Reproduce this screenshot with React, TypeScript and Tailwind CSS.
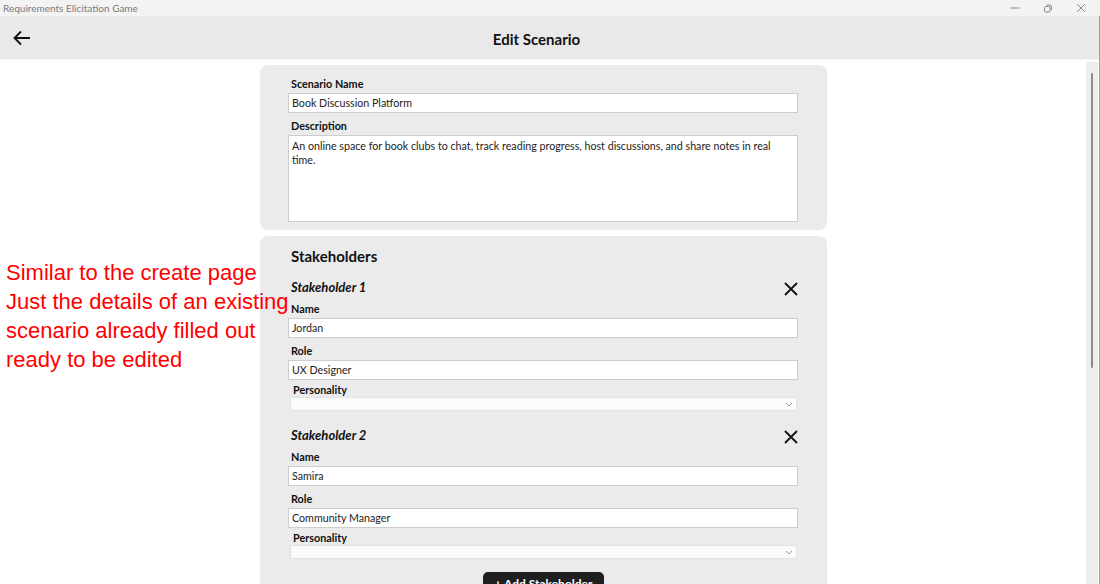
import React from "react";

const ui = { fontFamily: 'Lato, "Open Sans", sans-serif' };

function Label({ children, indent = false }: { children: React.ReactNode; indent?: boolean }) {
  return (
    <div className={`h-[14px] text-[10.8px] leading-[14px] font-bold text-[#111] ${indent ? "pl-[5px]" : "pl-[3px]"}`}>
      {children}
    </div>
  );
}

function TextInput({ value }: { value: string }) {
  return (
    <div className="mt-[2px] h-[20px] w-[510px] bg-white border border-[#cdcdcd] flex items-center pl-[3px] text-[10.7px] text-[#222]">
      {value}
    </div>
  );
}

function SelectBox() {
  return (
    <div className="ml-[2px] h-[14px] w-[507px] bg-[#fbfbfb] border border-[#e2e2e2] flex items-center justify-end pr-[3px]">
      <svg width="8" height="5" viewBox="0 0 8 5" fill="none">
        <path d="M1 1l3 3 3-3" stroke="#9a9a9a" strokeWidth="1" />
      </svg>
    </div>
  );
}

function Stakeholder({ n, name, role, first }: { n: number; name: string; role: string; first?: boolean }) {
  return (
    <div className={first ? "mt-[13px]" : "mt-[16px]"}>
      <div className="h-[18px] flex items-center justify-between pr-[28px]">
        <div className="pl-[3px] text-[13px] font-bold italic text-[#111]">Stakeholder {n}</div>
        <svg width="16" height="16" viewBox="0 0 16 16" fill="none" className="mt-[2px]">
          <path d="M2 2l12 12M14 2L2 14" stroke="#111" strokeWidth="1.8" />
        </svg>
      </div>
      <div className="mt-[5px]"><Label>Name</Label></div>
      <TextInput value={name} />
      <div className="mt-[6px]"><Label>Role</Label></div>
      <TextInput value={role} />
      <div className="mt-[3px]"><Label indent>Personality</Label></div>
      <SelectBox />
    </div>
  );
}

export default function App() {
  return (
    <div className="w-[1100px] h-[584px] overflow-hidden flex flex-col bg-white relative" style={ui}>
      {/* Title bar */}
      <div className="h-[16px] bg-[#f3f3f3] flex items-center justify-between shrink-0">
        <div className="pl-[3px] text-[10px] text-[#7a7a7a] leading-[16px]">Requirements Elicitation Game</div>
        <div className="flex items-center h-full">
          <div className="w-[33px] flex justify-center">
            <svg width="10" height="10" viewBox="0 0 10 10"><path d="M0.5 5h9" stroke="#8a8a8a" strokeWidth="1" /></svg>
          </div>
          <div className="w-[33px] flex justify-center">
            <svg width="10" height="10" viewBox="0 0 10 10" fill="none">
              <rect x="1.5" y="3.5" width="5.5" height="5.5" rx="1" stroke="#8a8a8a" />
              <path d="M3.5 2h3.5a1.5 1.5 0 0 1 1.5 1.5V7" stroke="#8a8a8a" />
            </svg>
          </div>
          <div className="w-[33px] flex justify-center mr-[3px]">
            <svg width="10" height="10" viewBox="0 0 10 10"><path d="M1 1l8 8M9 1L1 9" stroke="#8a8a8a" strokeWidth="1" /></svg>
          </div>
        </div>
      </div>

      {/* Header */}
      <div className="h-[44px] bg-[#e9e9e9] border-b border-[#f4f4f4] shrink-0 relative flex items-center justify-center">
        <div className="absolute left-[12px] top-[12px]">
          <svg width="20" height="20" viewBox="0 0 20 20" fill="none">
            <path d="M18 10H3M9 3.5L2.5 10 9 16.5" stroke="#111" strokeWidth="1.8" />
          </svg>
        </div>
        <div className="text-[15px] font-bold text-[#111] ml-[-27px] mt-[4px]">Edit Scenario</div>
      </div>

      {/* Main */}
      <div className="flex-1 flex min-h-0">
        <div className="w-[260px] shrink-0 pt-[198px] pl-[6px] relative z-10">
          <div className="text-[22px] leading-[29px] text-[#ff0000] whitespace-nowrap" style={{ fontFamily: '"Liberation Sans", Arial, sans-serif' }}>
            <div>Similar to the create page</div>
            <div>Just the details of an existing</div>
            <div>scenario already filled out</div>
            <div>ready to be edited</div>
          </div>
        </div>

        <div className="w-[567px] shrink-0 pt-[5px] flex flex-col gap-[6px]">
          {/* Card 1 */}
          <div className="bg-[#ebebeb] rounded-[8px] pt-[12px] pb-[8px] pl-[28px]">
            <Label>Scenario Name</Label>
            <TextInput value="Book Discussion Platform" />
            <div className="mt-[6px]"><Label>Description</Label></div>
            <div className="mt-[2px] h-[87px] w-[510px] bg-white border border-[#cdcdcd] px-[3px] pt-[3px] text-[10.7px] leading-[14px] text-[#222]">
              An online space for book clubs to chat, track reading progress, host discussions, and share notes in real time.
            </div>
          </div>

          {/* Card 2 */}
          <div className="bg-[#ebebeb] rounded-t-[8px] pt-[10px] pl-[28px] flex-1">
            <div className="pl-[3px] h-[20px] text-[15px] leading-[20px] font-bold text-[#111]">Stakeholders</div>
            <Stakeholder n={1} name="Jordan" role="UX Designer" first />
            <Stakeholder n={2} name="Samira" role="Community Manager" />
            <div className="mt-[13px] flex justify-center pr-[28px]">
              <div className="w-[121px] h-[20px] bg-[#1f1f1f] rounded-t-[5px] text-white text-[12px] font-bold flex items-start justify-center pt-[3px]">
                + Add Stakeholder
              </div>
            </div>
          </div>
        </div>

        <div className="flex-1" />

        {/* Scrollbar */}
        <div className="w-[12px] mt-[2px] bg-[#eeeeee] flex justify-center pt-[11px] mr-[2px]">
          <div className="w-[2px] h-[295px] bg-[#8c8c8c] rounded-full" />
        </div>
      </div>

      <div className="absolute right-0 top-[16px] bottom-0 w-[1px] bg-[#a0a0a0]" />
    </div>
  );
}
